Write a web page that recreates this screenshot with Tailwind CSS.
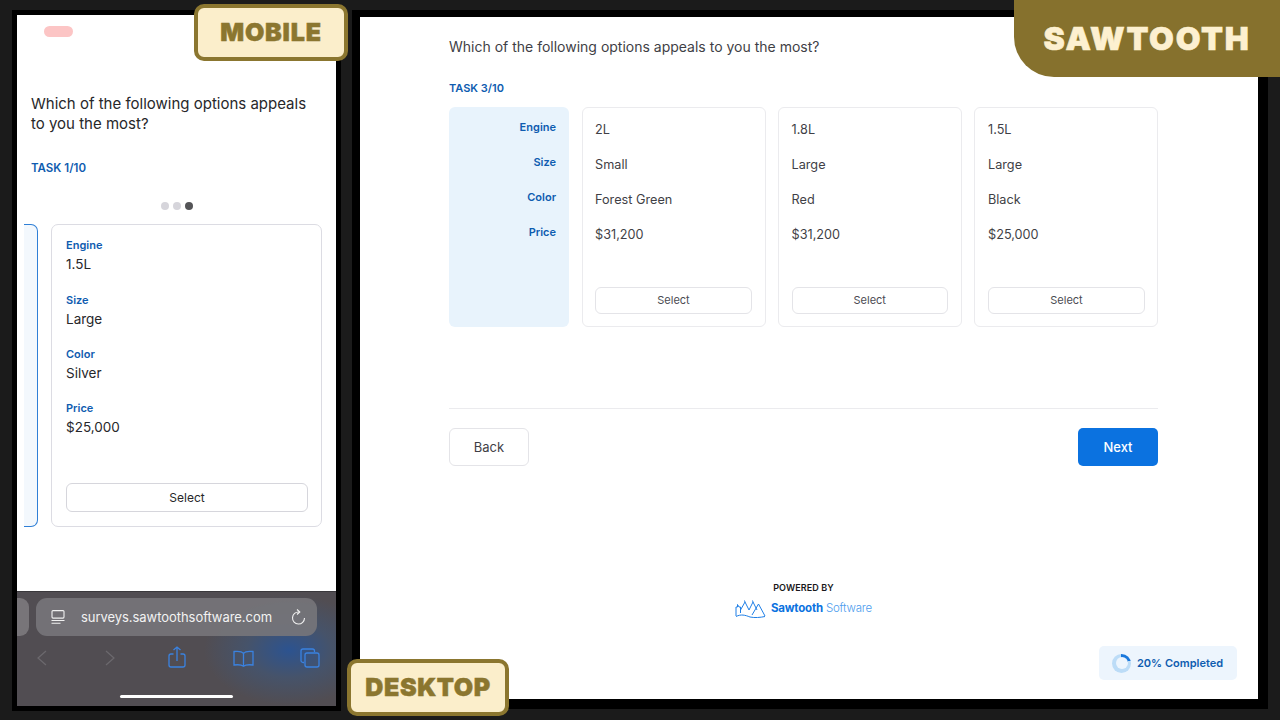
<!DOCTYPE html>
<html lang="en">
<head>
    <meta charset="UTF-8">
    <meta name="viewport" content="width=device-width, initial-scale=1.0">
    <title>Sawtooth survey</title>
    <script src="https://cdn.jsdelivr.net/npm/@tailwindcss/browser@4"></script>
</head>
<body class="bg-[#1b1b1b]">
<div class="relative w-[1280px] h-[720px] overflow-hidden flex items-start gap-[11px] pt-[10px] pl-[12px] font-['Inter',sans-serif] text-[#3f3f46]">

    <!-- mobile -->
    <div class="w-[329px] h-[701px] border-[5px] border-black bg-white flex flex-col shrink-0">
        <div class="flex-1 flex flex-col overflow-hidden">
            <div class="ml-[27px] mt-[11px] w-[29px] h-[11px] rounded-full bg-[#fcc5c5]"></div>
            <p class="ml-[14px] mt-[57px] w-[290px] text-[15px] leading-[20px] text-[#27272a]">Which of the following options appeals to you the most?</p>
            <p class="ml-[14px] mt-[26px] text-[11.500px] leading-[16px] font-semibold text-[#0f5cb0]">TASK 1/10</p>
            <div class="mt-[26px] flex justify-center gap-[4px]">
                <span class="w-[8px] h-[8px] rounded-full bg-[#d6d5db]"></span>
                <span class="w-[8px] h-[8px] rounded-full bg-[#d6d5db]"></span>
                <span class="w-[8px] h-[8px] rounded-full bg-[#545457]"></span>
            </div>
            <div class="mt-[14px] ml-[7px] flex gap-[13px]">
                <div class="w-[14px] h-[303px] bg-[#f3f8fd] border border-l-0 border-[#2f7fd6] rounded-r-[7px]"></div>
                <div class="w-[271px] h-[303px] border border-[#dcdce3] rounded-[7px] px-[14px] pt-[13px] flex flex-col">
                    <div class="h-[54.500px]">
                        <p class="text-[11px] leading-[14px] font-semibold text-[#0f5cb0]">Engine</p>
                        <p class="text-[13.500px] leading-[24px] text-[#27272a]">1.5L</p>
                    </div>
                    <div class="h-[54.300px]">
                        <p class="text-[11px] leading-[14px] font-semibold text-[#0f5cb0]">Size</p>
                        <p class="text-[13.500px] leading-[24px] text-[#27272a]">Large</p>
                    </div>
                    <div class="h-[54.300px]">
                        <p class="text-[11px] leading-[14px] font-semibold text-[#0f5cb0]">Color</p>
                        <p class="text-[13.500px] leading-[24px] text-[#27272a]">Silver</p>
                    </div>
                    <div>
                        <p class="text-[11px] leading-[14px] font-semibold text-[#0f5cb0]">Price</p>
                        <p class="text-[13.500px] leading-[24px] text-[#27272a]">$25,000</p>
                    </div>
                    <button class="mt-[44px] h-[29px] w-[242px] pt-[1px] border border-[#d6d6dc] rounded-[6px] text-[12px] text-[#27272a]">Select</button>
                </div>
            </div>
        </div>
        <!-- safari bar -->
        <div class="relative h-[115px] shrink-0 bg-[#514d52] bg-[radial-gradient(ellipse_85px_55px_at_272px_58px,#2c5390_0%,#46536a_50%,#514d52_100%)] border-t border-[#3a383c] overflow-hidden">
            <div class="flex gap-[7px] mt-[6px]">
                <div class="w-[12px] h-[38px] bg-[#787579] rounded-r-[9px]"></div>
                <div class="w-[281px] h-[38px] bg-[#77757a]/90 rounded-[11px] flex items-center pl-[15px] pr-[11px] text-white">
                    <svg class="w-[14px] h-[14px] shrink-0" viewBox="0 0 14 14" fill="none" stroke="#f0f0f0" stroke-width="1.100"><rect x="1" y="0.600" width="12" height="7.500" rx="1"/><path d="M0.500 10.500h13M0.500 13.300h9"/></svg>
                    <span class="ml-[16px] pt-[1px] text-[13px] leading-none tracking-[-0.050px] text-[#f2f2f2] whitespace-nowrap">surveys.sawtoothsoftware.com</span>
                    <svg class="ml-auto w-[15px] h-[16px] shrink-0" viewBox="0 0 15 16" fill="none" stroke="#f0f0f0" stroke-width="1.100"><path d="M8 3A6 6 0 1 0 13.500 9"/><path d="M6 0.500 8.800 3 6 5.500"/></svg>
                </div>
            </div>
            <div class="flex items-center mt-[10px] pl-[20px] h-[24px]">
                <svg class="w-[10px] h-[16px]" viewBox="0 0 10 16" fill="none" stroke="#6c696e" stroke-width="1.200"><path d="M9 1 1 8l8 7"/></svg>
                <svg class="ml-[58px] w-[10px] h-[16px]" viewBox="0 0 10 16" fill="none" stroke="#6c696e" stroke-width="1.200"><path d="m1 1 8 7-8 7"/></svg>
                <svg class="ml-[52.500px] w-[18px] h-[22px] -mt-[3px]" viewBox="0 0 18 22" fill="none" stroke="#3a82e0" stroke-width="1.300"><path d="M5.500 8H3a2 2 0 0 0-2 2v9a2 2 0 0 0 2 2h12a2 2 0 0 0 2-2v-9a2 2 0 0 0-2-2h-2.500M9 15V1M5.500 4 9 1l3.500 3"/></svg>
                <svg class="ml-[47.500px] w-[21px] h-[17px]" viewBox="0 0 21 17" fill="none" stroke="#3a82e0" stroke-width="1.300"><path d="M10.500 3.500C9 1.500 5 1 1 1.500V15c4-.5 7.500-.3 9.500 1.200 2-1.500 5.500-1.700 9.500-1.200V1.500c-4-.5-8 0-9.500 2zM10.500 3.500v12.700"/></svg>
                <svg class="ml-[46px] w-[20px] h-[20px]" viewBox="0 0 20 20" fill="none" stroke="#3a82e0" stroke-width="1.300"><path d="M4 14.500H3a2 2 0 0 1-2-2V3a2 2 0 0 1 2-2h9.500a2 2 0 0 1 2 2v1"/><rect x="5" y="5" width="14" height="14" rx="2"/></svg>
            </div>
            <div class="absolute left-[103px] bottom-[8px] w-[113px] h-[3px] rounded-full bg-white"></div>
        </div>
    </div>

    <!-- desktop -->
    <div class="relative w-[916px] h-[699px] border-t-[7px] border-l-[8px] border-r-[10px] border-b-[10px] border-black bg-white shrink-0">
        <div class="ml-[89px] w-[709px] flex flex-col">
            <p class="mt-[20px] text-[14px] leading-[20px] text-[#3f3f46]">Which of the following options appeals to you the most?</p>
            <p class="mt-[23px] text-[11px] leading-[16px] font-semibold text-[#0f5cb0]">TASK 3/10</p>
            <div class="mt-[11px] grid grid-cols-[121px_184px_184px_184px] gap-x-[12px] h-[220px]">
                <div class="w-[120px] bg-[#e8f3fc] rounded-[6px] pt-[13px] pr-[13px] text-right text-[11px] font-semibold leading-[15px] text-[#0f5cb0]">
                    <p class="h-[35px]">Engine</p>
                    <p class="h-[35px]">Size</p>
                    <p class="h-[35px]">Color</p>
                    <p>Price</p>
                </div>
                <div class="border border-[#ebebee] rounded-[6px] pl-[12px] pr-[13px] pt-[12px] text-[12.700px] leading-[20px] flex flex-col">
                    <p class="h-[35px]">2L</p>
                    <p class="h-[35px]">Small</p>
                    <p class="h-[35px]">Forest Green</p>
                    <p class="h-[35px]">$31,200</p>
                    <button class="mt-auto mb-[12px] h-[27px] pb-[1px] border border-[#e4e4e8] rounded-[6px] text-[11px] text-[#4b4b52]">Select</button>
                </div>
                <div class="border border-[#ebebee] rounded-[6px] pl-[12.500px] pr-[13px] pt-[12px] text-[12.700px] leading-[20px] flex flex-col">
                    <p class="h-[35px]">1.8L</p>
                    <p class="h-[35px]">Large</p>
                    <p class="h-[35px]">Red</p>
                    <p class="h-[35px]">$31,200</p>
                    <button class="mt-auto mb-[12px] h-[27px] pb-[1px] border border-[#e4e4e8] rounded-[6px] text-[11px] text-[#4b4b52]">Select</button>
                </div>
                <div class="border border-[#ebebee] rounded-[6px] pl-[13px] pr-[12px] pt-[12px] text-[12.700px] leading-[20px] flex flex-col">
                    <p class="h-[35px]">1.5L</p>
                    <p class="h-[35px]">Large</p>
                    <p class="h-[35px]">Black</p>
                    <p class="h-[35px]">$25,000</p>
                    <button class="mt-auto mb-[12px] h-[27px] pb-[1px] border border-[#e4e4e8] rounded-[6px] text-[11px] text-[#4b4b52]">Select</button>
                </div>
            </div>
            <div class="mt-[81px] h-px bg-[#ebebee]"></div>
            <div class="mt-[19px] flex justify-between">
                <button class="w-[80px] h-[38px] pt-[1px] border border-[#e4e4e8] rounded-[6px] text-[13px] text-[#3f3f46]">Back</button>
                <button class="w-[80px] h-[38px] pt-[1px] bg-[#0b72e0] rounded-[5px] text-[13px] font-medium text-white">Next</button>
            </div>
            <div class="mt-[116px] flex flex-col items-center">
                <p class="text-[9px] leading-[12px] font-semibold text-[#18181b] tracking-[0.100px]">POWERED BY</p>
                <div class="mt-[5px] flex items-center h-[20px]">
                    <svg class="w-[31px] h-[18px]" viewBox="0 0 31 18" fill="none" stroke="#1f7fe6" stroke-width="1"><path d="M1 16V7h1.500V4.500L4 7h1.500v6M5.500 10 10 2l4 8M10 2 9.500 0.500M14 10l4-8 4 8M18 2l-.5-1.500M17 15 23.500 4 30 16M1 16.500c5-2.500 9-1.500 14 .5 5 1 10 .5 15-.5"/></svg>
                    <span class="ml-[5px] text-[11.500px] font-bold text-[#0b72e0] tracking-[-0.200px]">Sawtooth</span>
                    <span class="ml-[3px] text-[11.500px] font-light text-[#4d9cee] tracking-[-0.200px]">Software</span>
                </div>
            </div>
        </div>
        <div class="absolute right-[21px] bottom-[19px] w-[138px] h-[34px] bg-[#edf5fd] rounded-[5px] flex items-center pl-[13px]">
            <div class="w-[19px] h-[19px] rounded-full bg-[conic-gradient(#1a78dc_0_20%,#bcdcf7_20%_100%)] flex items-center justify-center">
                <div class="w-[12px] h-[12px] rounded-full bg-[#edf5fd]"></div>
            </div>
            <span class="ml-[6px] text-[11px] font-semibold text-[#0f5cb0]">20% Completed</span>
        </div>
    </div>

    <!-- labels over the frames -->
    <div class="absolute left-[194px] top-[4px] w-[154px] h-[57px] bg-[#fbeecb] border-[4px] border-[#8b762f] rounded-[10px] flex items-center justify-center text-[25px] font-black tracking-[0.800px] [-webkit-text-stroke:0.500px_#8b762f] text-[#8b762f]">MOBILE</div>
    <div class="absolute left-[347px] top-[659px] w-[162px] h-[57px] bg-[#fbeecb] border-[4px] border-[#8b762f] rounded-[10px] flex items-center justify-center text-[25px] font-black tracking-[0.600px] [-webkit-text-stroke:0.500px_#8b762f] text-[#8b762f]">DESKTOP</div>
    <div class="absolute right-0 top-0 w-[266px] h-[77px] bg-[#86712d] rounded-bl-[40px] flex items-center justify-center text-[32px] font-black tracking-[1.750px] [-webkit-text-stroke:0.600px_#fdf0d0] text-[#fdf0d0]">SAWTOOTH</div>
</div>
</body>
</html>
